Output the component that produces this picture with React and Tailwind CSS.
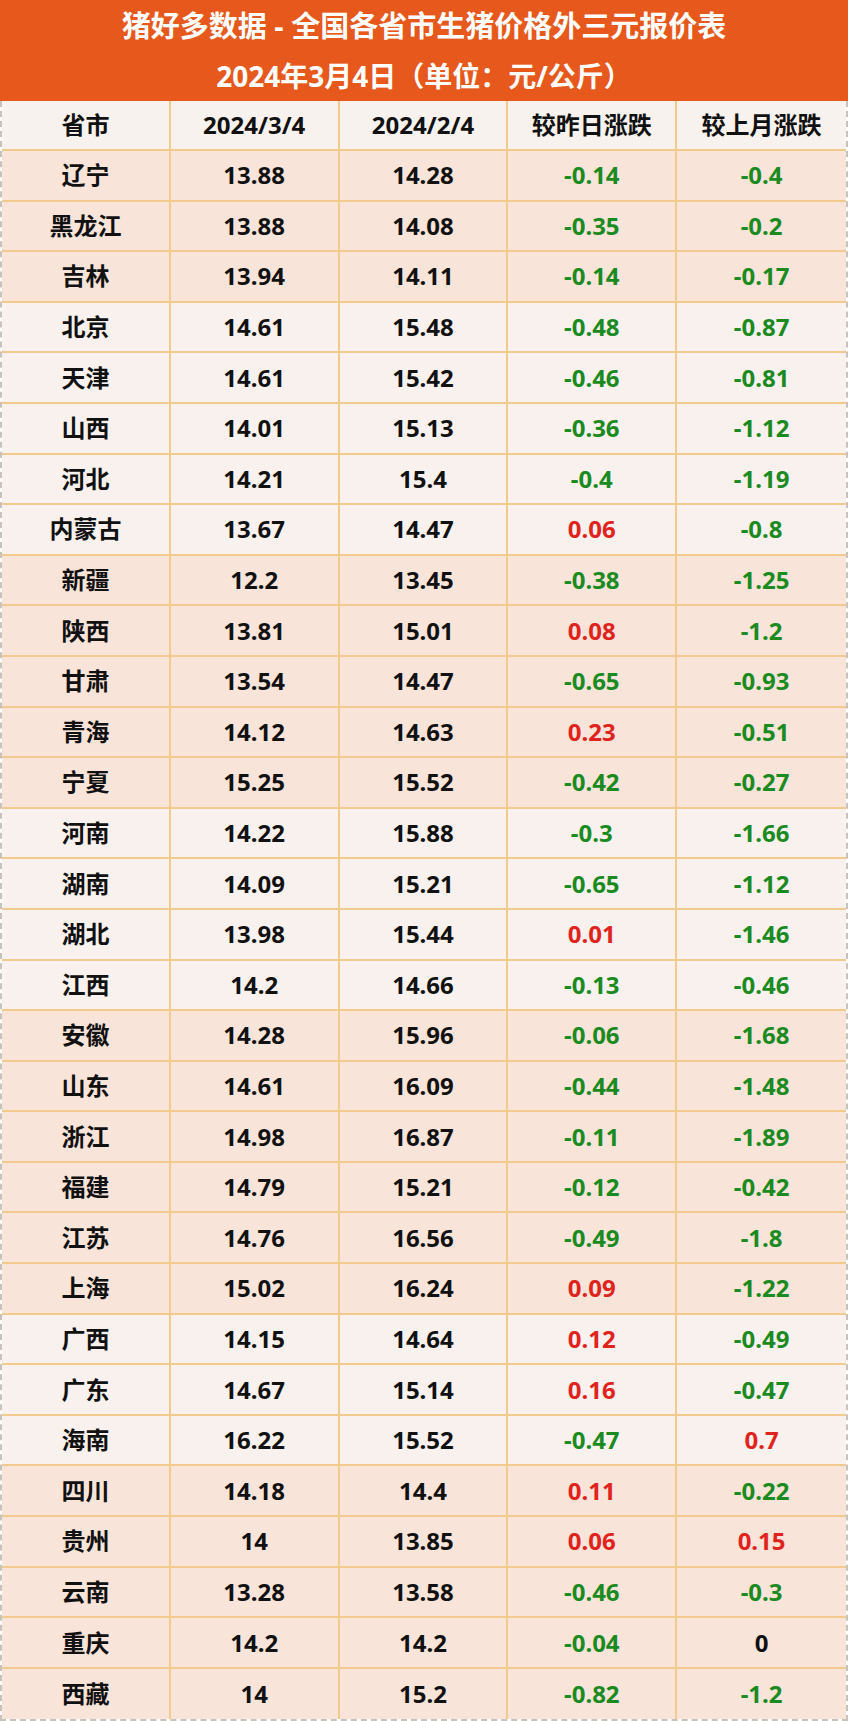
import React from 'react';

const rows = [
    ['辽宁', '13.88', '14.28', '-0.14', '-0.4', 0],
    ['黑龙江', '13.88', '14.08', '-0.35', '-0.2', 0],
    ['吉林', '13.94', '14.11', '-0.14', '-0.17', 0],
    ['北京', '14.61', '15.48', '-0.48', '-0.87', 1],
    ['天津', '14.61', '15.42', '-0.46', '-0.81', 1],
    ['山西', '14.01', '15.13', '-0.36', '-1.12', 1],
    ['河北', '14.21', '15.4', '-0.4', '-1.19', 1],
    ['内蒙古', '13.67', '14.47', '0.06', '-0.8', 1],
    ['新疆', '12.2', '13.45', '-0.38', '-1.25', 0],
    ['陕西', '13.81', '15.01', '0.08', '-1.2', 0],
    ['甘肃', '13.54', '14.47', '-0.65', '-0.93', 0],
    ['青海', '14.12', '14.63', '0.23', '-0.51', 0],
    ['宁夏', '15.25', '15.52', '-0.42', '-0.27', 0],
    ['河南', '14.22', '15.88', '-0.3', '-1.66', 1],
    ['湖南', '14.09', '15.21', '-0.65', '-1.12', 1],
    ['湖北', '13.98', '15.44', '0.01', '-1.46', 1],
    ['江西', '14.2', '14.66', '-0.13', '-0.46', 1],
    ['安徽', '14.28', '15.96', '-0.06', '-1.68', 0],
    ['山东', '14.61', '16.09', '-0.44', '-1.48', 0],
    ['浙江', '14.98', '16.87', '-0.11', '-1.89', 0],
    ['福建', '14.79', '15.21', '-0.12', '-0.42', 0],
    ['江苏', '14.76', '16.56', '-0.49', '-1.8', 0],
    ['上海', '15.02', '16.24', '0.09', '-1.22', 0],
    ['广西', '14.15', '14.64', '0.12', '-0.49', 1],
    ['广东', '14.67', '15.14', '0.16', '-0.47', 1],
    ['海南', '16.22', '15.52', '-0.47', '0.7', 1],
    ['四川', '14.18', '14.4', '0.11', '-0.22', 0],
    ['贵州', '14', '13.85', '0.06', '0.15', 0],
    ['云南', '13.28', '13.58', '-0.46', '-0.3', 0],
    ['重庆', '14.2', '14.2', '-0.04', '0', 0],
    ['西藏', '14', '15.2', '-0.82', '-1.2', 0],
];

// green for drops, red for rises, black for zero
const changeColor = v => {
    const n = Number(v);
    if (n < 0) return 'text-[#1b8a1f]';
    if (n > 0) return 'text-[#e0231c]';
    return 'text-[#111111]';
};

const cell = 'flex items-center justify-center border-r-2 border-[#f2cb8c] last:border-r-0';

const App = () => {
    return (
        <div className="w-[848px] bg-white font-['Noto_Sans','Noto_Sans_CJK_SC',sans-serif] font-bold">
            {/* title band */}
            <div className="bg-[#e6581b] text-white h-[101px] flex flex-col items-center justify-center">
                <div className="text-[29px] leading-[50px]">猪好多数据 - 全国各省市生猪价格外三元报价表</div>
                <div className="text-[28px] leading-[50px]">2024年3月4日（单位：元/公斤）</div>
            </div>

            <div className="border-x-2 border-b-2 border-dashed border-[#c8c2bd]">
                <div className="grid grid-cols-5 h-[50px] bg-[#f8f2ef] text-[#111111] text-[24px] border-b-2 border-[#f2cb8c]">
                    <div className={cell}>省市</div>
                    <div className={cell}>2024/3/4</div>
                    <div className={cell}>2024/2/4</div>
                    <div className={cell}>较昨日涨跌</div>
                    <div className={cell}>较上月涨跌</div>
                </div>

                {rows.map(([city, cur, prev, day, month, light], idx) => (
                    <div
                        key={city}
                        className={`grid grid-cols-5 h-[50.6px] text-[24px] ${
                            light ? 'bg-[#f8f1ee]' : 'bg-[#f9e4da]'
                        } ${idx !== rows.length - 1 ? 'border-b-2 border-[#f2cb8c]' : ''}`}
                    >
                        <div className={`${cell} text-[#111111]`}>{city}</div>
                        <div className={`${cell} text-[#111111]`}>{cur}</div>
                        <div className={`${cell} text-[#111111]`}>{prev}</div>
                        <div className={`${cell} ${changeColor(day)}`}>{day}</div>
                        <div className={`${cell} ${changeColor(month)}`}>{month}</div>
                    </div>
                ))}
            </div>
        </div>
    );
};

export default App;
